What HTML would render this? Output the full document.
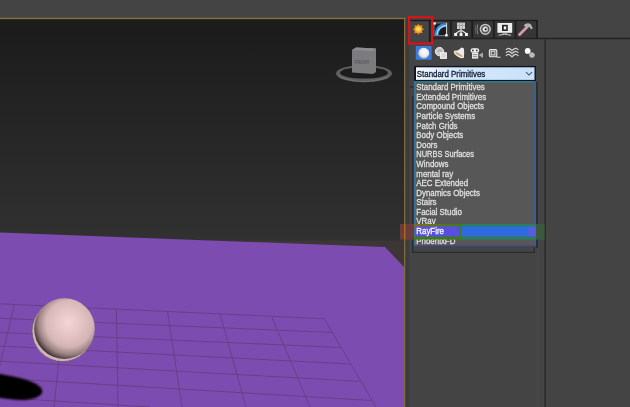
<!DOCTYPE html>
<html>
<head>
<meta charset="utf-8">
<title>3ds Max - Create panel - RayFire</title>
<style>
html,body{margin:0;padding:0;}
body{width:630px;height:407px;overflow:hidden;background:#444444;position:relative;font-family:"Liberation Sans",sans-serif;}
#scene{position:absolute;left:0;top:0;width:630px;height:407px;}
#scene text{font-family:"Liberation Sans",sans-serif;}
</style>
</head>
<body>
<svg id="scene" width="630" height="407" viewBox="0 0 630 407">
  <defs>
    <linearGradient id="vp" x1="0" y1="0" x2="0" y2="1">
      <stop offset="0" stop-color="#1b1b1b"/>
      <stop offset="1" stop-color="#313131"/>
    </linearGradient>
    <radialGradient id="sph" cx="0.56" cy="0.40" r="0.68">
      <stop offset="0" stop-color="#f5d6d6"/>
      <stop offset="0.3" stop-color="#e5c5c5"/>
      <stop offset="0.6" stop-color="#d3b3b3"/>
      <stop offset="0.85" stop-color="#b39797"/>
      <stop offset="1" stop-color="#8c7476"/>
    </radialGradient>
    <radialGradient id="sphd" cx="0.58" cy="0.42" r="0.62">
      <stop offset="0" stop-color="#1a1014" stop-opacity="0"/>
      <stop offset="0.62" stop-color="#1a1014" stop-opacity="0"/>
      <stop offset="0.82" stop-color="#1a1014" stop-opacity="0.22"/>
      <stop offset="0.93" stop-color="#1a1014" stop-opacity="0.55"/>
      <stop offset="1" stop-color="#1a1014" stop-opacity="0.9"/>
    </radialGradient>
    <radialGradient id="sun" cx="0.5" cy="0.5" r="0.5">
      <stop offset="0" stop-color="#fff27a"/>
      <stop offset="0.35" stop-color="#ffc533"/>
      <stop offset="0.7" stop-color="#ef8a1c"/>
      <stop offset="1" stop-color="#c8641c" stop-opacity="0"/>
    </radialGradient>
    <radialGradient id="ball" cx="0.55" cy="0.4" r="0.65">
      <stop offset="0" stop-color="#ffffff"/>
      <stop offset="0.6" stop-color="#e8e8ee"/>
      <stop offset="1" stop-color="#9aa0b0"/>
    </radialGradient>
    <linearGradient id="olv" x1="0" y1="0" x2="1" y2="0"><stop offset="0" stop-color="#86691f"/><stop offset="0.5" stop-color="#5d7420"/><stop offset="1" stop-color="#44791f"/></linearGradient>
    <linearGradient id="ddg" x1="0" y1="0" x2="1" y2="0">
      <stop offset="0" stop-color="#f6faff"/>
      <stop offset="0.3" stop-color="#d6e9fb"/>
      <stop offset="1" stop-color="#c8e1f8"/>
    </linearGradient>
    <filter id="b1"><feGaussianBlur stdDeviation="1.2"/></filter>
    <filter id="b08"><feGaussianBlur stdDeviation="0.8"/></filter>
    <filter id="b05"><feGaussianBlur stdDeviation="0.5"/></filter>
    <filter id="b02"><feGaussianBlur stdDeviation="0.25"/></filter>
    <filter id="b03"><feGaussianBlur stdDeviation="0.35"/></filter>
  </defs>

  <!-- ===== viewport ===== -->
  <rect x="0" y="19" width="404" height="222" fill="url(#vp)"/>
  <rect x="0" y="240.4" width="404" height="170" fill="#3c3636"/>
  <polygon points="0,232.5 385,247 404,267 404,407 0,407" fill="#7d4cb0"/>
  <g stroke="#643a78" stroke-width="0.9" fill="none" opacity="0.8">
    <line x1="0" y1="303.8" x2="324.3" y2="318.7"/>
    <line x1="0" y1="318.3" x2="332" y2="332.5"/>
    <line x1="0" y1="332.5" x2="341" y2="347.5"/>
    <line x1="0" y1="346" x2="350.5" y2="364"/>
    <line x1="0" y1="361.2" x2="360.2" y2="381.4"/>
    <line x1="0" y1="378.2" x2="371.5" y2="400.5"/>
    <line x1="0" y1="397.5" x2="150" y2="407"/>
    <line x1="14.4" y1="304.5" x2="-10" y2="407"/>
    <line x1="64.5" y1="306.8" x2="54" y2="407"/>
    <line x1="116.4" y1="309.2" x2="118" y2="407"/>
    <line x1="167.5" y1="311.5" x2="182" y2="407"/>
    <line x1="220" y1="313.9" x2="246" y2="407"/>
    <line x1="271.5" y1="316.3" x2="310" y2="407"/>
    <line x1="324.3" y1="318.7" x2="376" y2="407"/>
  </g>
  <path d="M-5,373.2 C8,375.5 22,377.5 32,382 C39,385 43.5,389 42,393 C40,397.5 30,400 22,400 C12,400 5,398.5 -5,397 Z" fill="#050005" filter="url(#b08)"/>
  <g filter="url(#b05)">
    <circle cx="62.6" cy="331" r="30.6" fill="#cdb4b6" stroke="#6a5068" stroke-width="0.7"/>
    <circle cx="64.5" cy="328.6" r="30.3" fill="url(#sph)"/>
    <circle cx="64.5" cy="328.6" r="30.3" fill="url(#sphd)"/>
  </g>
  <!-- viewcube -->
  <g filter="url(#b05)">
    <ellipse cx="364" cy="73.6" rx="28" ry="8.6" fill="#5e5e5e"/>
    <ellipse cx="364" cy="72.9" rx="24" ry="5.7" fill="#1b1b1b"/>
    <path d="M340,77 Q364,86 388,77" fill="none" stroke="#727272" stroke-width="1.2"/>
  </g>
  <polygon points="352,50 356,47.5 376,48.5 376,72 373,74 352,72.5" fill="#7c7c7f" filter="url(#b05)"/>
  <polygon points="352,50 356,47.5 376,48.5 372.5,51" fill="#8e8e92"/>
  <text x="354.5" y="64" font-size="6" fill="#585860" stroke="#585860" stroke-width="0.2" textLength="15" lengthAdjust="spacingAndGlyphs" filter="url(#b02)">FRONT</text>
  <rect x="-2" y="18.5" width="406.8" height="392" fill="none" stroke="#86723f" stroke-width="1.4"/>

  <!-- ===== command panel ===== -->
  <g id="tabs">
    <rect x="433" y="20.5" width="104" height="18" fill="#363636"/>
    <g stroke="#1f1f1f" stroke-width="1.8" filter="url(#b03)">
      <line x1="429.8" y1="20" x2="429.8" y2="42"/>
      <line x1="451" y1="20" x2="451" y2="39"/>
      <line x1="472.2" y1="20" x2="472.2" y2="39"/>
      <line x1="494" y1="20" x2="494" y2="39"/>
      <line x1="515.6" y1="20" x2="515.6" y2="39"/>
      <line x1="537" y1="20" x2="537" y2="39"/>
      <line x1="410" y1="20.5" x2="537.8" y2="20.5" stroke-width="1.5"/>
      <line x1="433" y1="38.5" x2="630" y2="38.5" stroke="#242424" stroke-width="1.7"/>
    </g>
    <rect x="405.4" y="19" width="3.8" height="390" fill="#3c3c3c"/>
    <line x1="545.3" y1="39" x2="545.3" y2="407" stroke="#2a2a2a" stroke-width="1.6"/>
    <line x1="547" y1="40" x2="547" y2="407" stroke="#4a4a4a" stroke-width="1"/>
    <line x1="537.8" y1="249" x2="537.8" y2="407" stroke="#4b4b4b" stroke-width="1"/>
    <!-- create: sun -->
    <g filter="url(#b05)">
      <path d="M418.4,23.4 L419.8,26 L422.6,25 L421.8,27.8 L424.2,29.2 L421.8,30.6 L422.6,33.4 L419.8,32.4 L418.4,35 L417,32.4 L414.2,33.4 L415,30.6 L412.6,29.2 L415,27.8 L414.2,25 L417,26 Z" fill="#e27c1c"/>
      <circle cx="418.4" cy="29.2" r="3.9" fill="#f39a22"/>
      <circle cx="418.4" cy="29.1" r="2.6" fill="#ffc63a"/>
      <circle cx="418.4" cy="29" r="1.4" fill="#ffe86a"/>
    </g>
    <!-- modify: arc -->
    <g filter="url(#b03)">
      <rect x="434" y="23" width="12.6" height="12.6" fill="#1c1c22" stroke="#8d8d8d" stroke-width="0.8"/>
      <path d="M436.6,35.2 Q436.8,25.6 446,24.8" fill="none" stroke="#3588de" stroke-width="3.8"/>
      <path d="M437,35 Q437.6,26.6 445.8,25.4" fill="none" stroke="#9ed6ff" stroke-width="1.5"/>
      <line x1="446.6" y1="23" x2="446.6" y2="35" stroke="#d4d4d4" stroke-width="1"/>
      <rect x="445.2" y="34" width="2.4" height="2.4" fill="#ffffff"/>
      <rect x="433.4" y="22.4" width="2.4" height="2.2" fill="#ffffff"/>
    </g>
    <!-- hierarchy -->
    <g filter="url(#b03)">
      <rect x="457" y="22.6" width="8" height="6.4" fill="#cfcfcf"/>
      <path d="M459.6,23 V29 M462.3,23 V29 M457,25.5 H465" stroke="#9a9a9a" stroke-width="0.7" fill="none"/>
      <path d="M461,29 V33 M460.2,30.5 L455.7,33.5 M461.8,30.5 L466.3,33.5" stroke="#e8e8e8" stroke-width="1.2" fill="none"/>
      <rect x="454.2" y="33" width="2.9" height="3" fill="#f2f2f2"/>
      <rect x="459.6" y="33" width="2.9" height="3" fill="#f2f2f2"/>
      <rect x="465" y="33" width="2.9" height="3" fill="#f2f2f2"/>
    </g>
    <!-- motion -->
    <g filter="url(#b03)">
      <circle cx="485.3" cy="29.3" r="4.9" fill="#4e4e4e" stroke="#c4c4c4" stroke-width="1.5"/>
      <circle cx="485.3" cy="29.3" r="2.7" fill="#f0f0f0" stroke="#8a8a8a" stroke-width="0.7"/>
      <circle cx="485.7" cy="29.3" r="1.1" fill="#1c1c1c"/>
      <path d="M477.8,24.4 Q476.4,29.3 477.8,34.2" stroke="#8c8c8c" stroke-width="0.9" fill="none"/>
      <path d="M475.8,25 Q474.8,29.3 475.8,33.6" stroke="#686868" stroke-width="0.8" fill="none"/>
    </g>
    <!-- display -->
    <g filter="url(#b03)">
      <rect x="497.4" y="23" width="14.8" height="9.8" fill="#ededed"/>
      <rect x="502" y="24.8" width="5.8" height="6.2" fill="#262626"/>
      <rect x="503.8" y="26.4" width="2.4" height="3" fill="#f4f4f4"/>
      <path d="M498.6,35.2 Q504.8,33.4 511,35.2" stroke="#cfcfcf" stroke-width="1" fill="none"/>
      <rect x="502.6" y="33" width="4.6" height="1.2" fill="#8f8f8f"/>
    </g>
    <!-- utilities: hammer -->
    <g filter="url(#b03)">
      <line x1="519.6" y1="34.6" x2="527.6" y2="26.6" stroke="#d59aa4" stroke-width="2.8" stroke-linecap="round"/>
      <path d="M523.6,25.2 Q527.6,21.6 531,24.6 L532.8,28.6 L531,29.2 L529,26.6 L526.6,27.8 Z" fill="#b2b2b2"/>
    </g>
  </g>

  <!-- create categories -->
  <g id="cats">
    <rect x="415.8" y="46" width="15.8" height="13.8" fill="#3c7cd6"/>
    <circle cx="423.7" cy="53.2" r="5.5" fill="url(#ball)"/>
    <g filter="url(#b03)">
      <!-- shapes -->
      <circle cx="439.5" cy="51.6" r="4.2" fill="#cdcdcd" stroke="#e9e9e9" stroke-width="1"/>
      <path d="M437.6,51.4 Q439.6,49 441.6,51.2" stroke="#8a8a8a" stroke-width="0.9" fill="none"/>
      <rect x="440.6" y="52.8" width="5.8" height="5.6" fill="#d9d9d9" stroke="#f5f5f5" stroke-width="1"/>
      <!-- lights -->
      <path d="M461.2,47.6 L463.8,48.2 Q464.8,53 463.6,57.4 L454.2,51.4 Q459,50.8 461.2,47.6 Z" fill="#ebebf1"/>
      <ellipse cx="458.9" cy="54.4" rx="5.4" ry="1.9" transform="rotate(32.6 458.9 54.4)" fill="#d9c39c" stroke="#f6f2ea" stroke-width="0.9"/>
      <line x1="456" y1="52.8" x2="461.6" y2="56.2" stroke="#9a8664" stroke-width="0.6"/>
      <!-- cameras -->
      <rect x="470.6" y="48.2" width="8.6" height="4.6" rx="2.2" fill="#f3f3f3"/>
      <circle cx="472.9" cy="50.4" r="0.9" fill="#333"/>
      <circle cx="476.8" cy="50.4" r="0.9" fill="#333"/>
      <rect x="472" y="53" width="6.2" height="5.6" fill="#e9e9e9"/>
      <path d="M472.8,54.6 H477.2 M472.8,56.6 H477.2" stroke="#777" stroke-width="0.8"/>
      <path d="M478.6,55 L483,52.4 V58 Z" fill="#a9a9a9"/>
      <!-- helpers -->
      <rect x="489.4" y="49.6" width="7.4" height="7.2" rx="1" fill="#8a8a8a" stroke="#e4e4e4" stroke-width="1.1"/>
      <rect x="491.6" y="51.6" width="3" height="3.2" fill="#5a5a5a" stroke="#d8d8d8" stroke-width="0.7"/>
      <line x1="496.6" y1="57.2" x2="500.4" y2="57.2" stroke="#e4e4e4" stroke-width="1"/>
      <!-- space warps -->
      <g stroke="#d2d2d2" stroke-width="1.2" fill="none" stroke-linejoin="round">
        <path d="M506,49.8 Q507.4,48.2 508.6,48.4 Q510.4,48.8 512,50.5 Q513.8,48.8 515.6,48.4 Q516.8,48.2 518.4,49.8"/>
        <path d="M506,52.8 Q507.4,51.2 508.6,51.4 Q510.4,51.8 512,53.5 Q513.8,51.8 515.6,51.4 Q516.8,51.2 518.4,52.8"/>
        <path d="M506,55.8 Q507.4,54.2 508.6,54.4 Q510.4,54.8 512,56.8 Q513.8,54.8 515.6,54.4 Q516.8,54.2 518.4,55.8"/>
      </g>
    </g>
    <!-- systems -->
    <g filter="url(#b05)">
      <circle cx="527.7" cy="50.9" r="2.9" fill="#ffffff"/>
      <circle cx="532" cy="55" r="2.6" fill="#c9c9c9"/>
      <path d="M529.2,55 H534.8 M532,52.2 V57.8 M530,53 L534,57 M534,53 L530,57" stroke="#b5b5b5" stroke-width="0.8"/>
    </g>
  </g>

  <!-- rollout frame behind the list -->
  <g stroke="#2a2a2a" stroke-width="1.2" fill="none">
    <path d="M412.6,96 V252.4 H534.4 V247"/>
    <line x1="410" y1="87" x2="413.4" y2="87"/>
  </g>

  <!-- dropdown -->
  <rect x="415.3" y="66.6" width="119.9" height="14" fill="url(#ddg)" stroke="#10121f" stroke-width="1.4"/>
  <rect x="414.2" y="66" width="1.6" height="15.2" fill="#141420"/>
  <path d="M526,72.2 L529,75.1 L532,72.2" fill="none" stroke="#46526c" stroke-width="1.1" filter="url(#b02)"/>
  <g filter="url(#b02)"><text transform="translate(416.8,76.6) scale(0.92,1)" font-size="8.6" fill="#121c36" stroke="#121c36" stroke-width="0.3">Standard Primitives</text></g>

  <!-- list -->
  <rect x="414" y="81" width="122" height="165.6" fill="#575757"/>
  <rect x="414" y="81" width="2" height="165.6" fill="#3b7094"/>
  <rect x="414" y="81.2" width="122" height="1.5" fill="#2b7f8a"/>
  <rect x="533.8" y="81" width="2.2" height="166" fill="#3a5f88"/>
  <rect x="536" y="82" width="2" height="166" fill="#2f2f2f" filter="url(#b03)"/>
  <rect x="414" y="245.6" width="122" height="1.6" fill="#3c4272"/>
  <g font-size="8.6" filter="url(#b02)" stroke="#e2e2e2" stroke-width="0.25">
    <text transform="translate(416.3,90.20) scale(0.92,1)" fill="#e2e2e2">Standard Primitives</text>
    <text transform="translate(416.3,99.79) scale(0.92,1)" fill="#e2e2e2">Extended Primitives</text>
    <text transform="translate(416.3,109.38) scale(0.92,1)" fill="#e2e2e2">Compound Objects</text>
    <text transform="translate(416.3,118.97) scale(0.92,1)" fill="#e2e2e2">Particle Systems</text>
    <text transform="translate(416.3,128.56) scale(0.92,1)" fill="#e2e2e2">Patch Grids</text>
    <text transform="translate(416.3,138.15) scale(0.92,1)" fill="#e2e2e2">Body Objects</text>
    <text transform="translate(416.3,147.74) scale(0.92,1)" fill="#e2e2e2">Doors</text>
    <text transform="translate(416.3,157.33) scale(0.87,1)" fill="#e2e2e2">NURBS Surfaces</text>
    <text transform="translate(416.3,166.92) scale(0.92,1)" fill="#e2e2e2">Windows</text>
    <text transform="translate(416.3,176.51) scale(0.92,1)" fill="#e2e2e2">mental ray</text>
    <text transform="translate(416.3,186.10) scale(0.92,1)" fill="#e2e2e2">AEC Extended</text>
    <text transform="translate(416.3,195.69) scale(0.92,1)" fill="#e2e2e2">Dynamics Objects</text>
    <text transform="translate(416.3,205.28) scale(0.92,1)" fill="#e2e2e2">Stairs</text>
    <text transform="translate(416.3,214.87) scale(0.92,1)" fill="#e2e2e2">Facial Studio</text>
    <text transform="translate(416.3,224.46) scale(0.92,1)" fill="#e2e2e2">VRay</text>
    <text transform="translate(416.3,243.64) scale(0.92,1)" fill="#e2e2e2">PhoenixFD</text>
  </g>
  <!-- selection + jpeg-smeared annotation box -->
  <g filter="url(#b03)">
  <rect x="416" y="226.2" width="120" height="10.4" fill="#2f6be0"/>
  <rect x="416" y="226.2" width="44" height="10.4" fill="#594fe0"/>
  <rect x="528.5" y="226.2" width="7" height="10.4" fill="#5a5ce0"/>
  <rect x="461" y="224" width="75" height="2.3" fill="#2a7d62"/>
  <rect x="461" y="236.6" width="75" height="3" fill="#2a7d62"/>
  <rect x="536" y="224" width="8.5" height="15.6" fill="#3a5a3c"/>
  <rect x="414" y="224" width="47" height="2.4" fill="url(#olv)"/>
  <rect x="414" y="236.6" width="47" height="3" fill="#41791f"/>
  <rect x="459" y="224" width="2.4" height="15.6" fill="#3f7a22"/>
  <rect x="400" y="224" width="14" height="15.6" fill="#6c3b3d"/>
  <rect x="404" y="224" width="1.4" height="15.6" fill="#a5701e"/>
  </g>
  <g font-size="8.6" filter="url(#b02)" stroke="#ffffff" stroke-width="0.25">
    <text transform="translate(416.3,234.05) scale(0.92,1)" fill="#ffffff">RayFire</text>
  </g>

  <!-- red annotation box on Create tab -->
  <rect x="409.1" y="17.2" width="23.1" height="26.4" fill="none" stroke="#df1018" stroke-width="2.1"/>
</svg>
</body>
</html>
